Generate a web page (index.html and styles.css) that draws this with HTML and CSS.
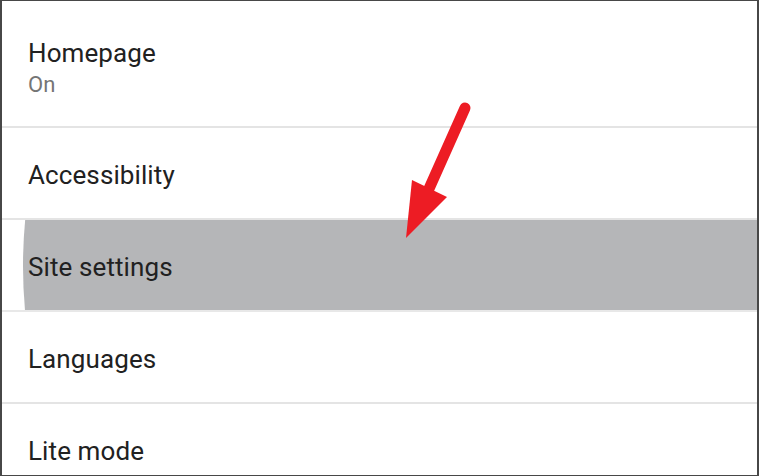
FILE: index.html
```html
<!DOCTYPE html>
<html>
<head>
<meta charset="utf-8">
<link rel="stylesheet" href="styles.css">
</head>
<body>
<div class="frame">
  <div class="row row-first">
    <div class="title">Homepage</div>
    <div class="subtitle">On</div>
  </div>
  <div class="row"><div class="title">Accessibility</div></div>
  <div class="row row-active">
    <div class="ripple"></div>
    <div class="title">Site settings</div>
  </div>
  <div class="row"><div class="title">Languages</div></div>
  <div class="row row-last"><div class="title">Lite mode</div></div>
  <svg class="arrow" width="759" height="476" viewBox="0 0 759 476">
    <line x1="465" y1="108" x2="428" y2="191" stroke="#ed1c24" stroke-width="11" stroke-linecap="round"/>
    <polygon points="412,180 447,197 406,238" fill="#ed1c24"/>
  </svg>
</div>
</body>
</html>
```
FILE: styles.css
```css
html, body {
  margin: 0;
  padding: 0;
  background: #ffffff;
}
.frame {
  position: relative;
  width: 759px;
  height: 476px;
  box-sizing: border-box;
  border-style: solid;
  border-color: #474747;
  border-width: 1px 2px 1px 2px;
  overflow: hidden;
  font-family: Roboto, "Liberation Sans", sans-serif;
  display: flex;
  flex-direction: column;
}
.row {
  position: relative;
  height: 92px;
  flex: none;
  box-sizing: border-box;
  padding: 31px 0 0 26px;
  border-bottom: 2px solid #e4e4e4;
  overflow: hidden;
}
.row-first {
  height: 127px;
  padding-top: 36px;
}
.row-last {
  flex: 1;
  border-bottom: none;
}
.title {
  position: relative;
  font-size: 26px;
  line-height: 32px;
  color: #212121;
  letter-spacing: 0.1px;
}
.subtitle {
  margin-top: 2px;
  font-size: 22px;
  line-height: 28px;
  color: #757575;
}
.row-active {
  border-bottom-color: #e8e8e8;
}
.ripple {
  position: absolute;
  left: 21px;
  top: -654px;
  width: 2000px;
  height: 1400px;
  border-radius: 50%;
  background: #b5b6b8;
}
.arrow {
  position: absolute;
  left: -2px;
  top: -1px;
  pointer-events: none;
}
```
